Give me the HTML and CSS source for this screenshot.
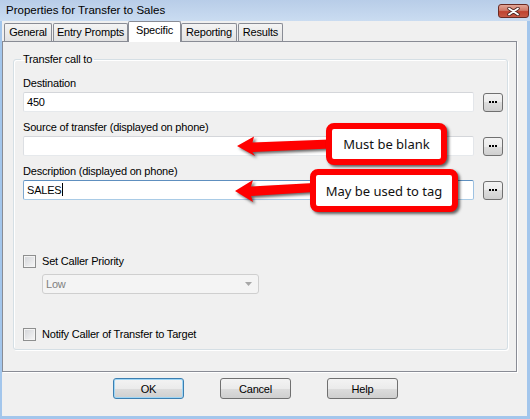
FILE: index.html
```html
<!DOCTYPE html>
<html lang="en">

<head>
    <meta charset="UTF-8">
    <meta name="viewport" content="width=device-width, initial-scale=1.0">
    <title>Properties for Transfer to Sales</title>
    <link rel="stylesheet" href="styles.css">
</head>

<body>
    <div class="window">
        <header class="titlebar">
            <span class="title">Properties for Transfer to Sales</span>
            <span class="close">
                <svg width="13" height="9" viewBox="0 0 13 9">
                    <path d="M2 1.5 L11 7.5 M11 1.5 L2 7.5" stroke="#4a2420" stroke-width="3.4" stroke-linecap="round" />
                    <path d="M2 1.5 L11 7.5 M11 1.5 L2 7.5" stroke="#fff" stroke-width="1.8" stroke-linecap="round" />
                </svg>
            </span>
        </header>

        <div class="frame">
            <nav class="tabs">
                <div class="tab tab_general">General</div>
                <div class="tab tab_prompts">Entry Prompts</div>
                <div class="tab tab_specific active">Specific</div>
                <div class="tab tab_reporting">Reporting</div>
                <div class="tab tab_results">Results</div>
            </nav>

            <section class="panel">
                <fieldset class="group">
                    <legend>Transfer call to</legend>

                    <div class="field">
                        <label>Destination</label>
                        <div class="field_row">
                            <div class="input">450</div>
                            <button class="more">
                                <svg width="8" height="2" viewBox="0 0 8 2"><rect x="0" y="0" width="2" height="2" /><rect x="3" y="0" width="2" height="2" /><rect x="6" y="0" width="2" height="2" /></svg>
                            </button>
                        </div>
                    </div>

                    <div class="field">
                        <label>Source of transfer (displayed on phone)</label>
                        <div class="field_row">
                            <div class="input"></div>
                            <button class="more">
                                <svg width="8" height="2" viewBox="0 0 8 2"><rect x="0" y="0" width="2" height="2" /><rect x="3" y="0" width="2" height="2" /><rect x="6" y="0" width="2" height="2" /></svg>
                            </button>
                        </div>
                    </div>

                    <div class="field">
                        <label>Description (displayed on phone)</label>
                        <div class="field_row">
                            <div class="input focus">SALES<span class="caret"></span></div>
                            <button class="more">
                                <svg width="8" height="2" viewBox="0 0 8 2"><rect x="0" y="0" width="2" height="2" /><rect x="3" y="0" width="2" height="2" /><rect x="6" y="0" width="2" height="2" /></svg>
                            </button>
                        </div>
                    </div>

                    <label class="check check_priority"><span class="box"></span>Set Caller Priority</label>
                    <div class="select">
                        <span>Low</span>
                        <svg width="7" height="4" viewBox="0 0 7 4"><path d="M0 0 H7 L3.5 4 Z" fill="#a7a7a7" /></svg>
                    </div>

                    <label class="check check_notify"><span class="box"></span>Notify Caller of Transfer to Target</label>
                </fieldset>
            </section>

            <div class="buttons">
                <button class="btn default">OK</button>
                <button class="btn">Cancel</button>
                <button class="btn">Help</button>
            </div>
        </div>

        <!-- annotations drawn on top of the dialog -->
        <svg class="arrows" width="530" height="419" viewBox="0 0 530 419">
            <path d="M237 146 L254 136.5 L252.5 142.5 L330 139.5 L330 148.5 L252.5 152 L255 156 Z" fill="#f00" />
            <path d="M235 191 L253 180 L251 186.5 L314 183 L314 192 L251 196 L253 202 Z" fill="#f00" />
        </svg>
        <div class="callout callout_blank">Must be blank</div>
        <div class="callout callout_tag">May be used to tag</div>
    </div>
</body>

</html>
```

FILE: styles.css
```css
* {
    margin: 0;
    padding: 0;
    box-sizing: border-box;
}

body {
    font-family: "Liberation Sans", Arial, sans-serif;
    font-size: 11px;
    color: #000;
}

.window {
    position: relative;
    width: 530px;
    height: 419px;
    display: flex;
    flex-direction: column;
    background-color: #f0f0f0;
    overflow: hidden;
    letter-spacing: -0.2px;
}

/* --------------------- Barra de titulo --------------------- */

.titlebar {
    height: 21px;
    flex: none;
    display: flex;
    justify-content: space-between;
    align-items: flex-start;
    padding-left: 6px;
    background: linear-gradient(#b8cde8, #cadcf1);
}

.title {
    font-size: 11.5px;
    line-height: 21px;
    letter-spacing: 0;
}

.close {
    width: 31px;
    height: 14px;
    margin-top: 4px;
    margin-right: 1px;
    display: flex;
    align-items: center;
    justify-content: center;
    border: 1px solid #6b2a22;
    border-radius: 3px;
    background: linear-gradient(#e2a697, #d07a68 45%, #c0432f 55%, #c65a45);
}

/* --------------------- Corpo --------------------- */

.frame {
    flex: 1;
    display: flex;
    flex-direction: column;
    border: solid #a3c6ec;
    border-width: 0 3px 3px 2px;
}

.tabs {
    height: 20px;
    display: flex;
    align-items: flex-end;
    padding-left: 2px;
}

.tab {
    height: 18px;
    line-height: 17px;
    text-align: center;
    margin-right: 1px;
    border: 1px solid #898c95;
    border-bottom: none;
    border-radius: 2px 2px 0 0;
    background: linear-gradient(#f4f4f4, #e2e2e2);
}

.tab_general { width: 48px; }
.tab_prompts { width: 75px; }
.tab_specific { width: 53px; }
.tab_reporting { width: 56px; }
.tab_results { width: 45px; }

.tab.active {
    position: relative;
    z-index: 1;
    height: 21px;
    margin: 0 0 -1px -1px;
    background: #fff;
}

.panel {
    height: 331px;
    margin-right: 10px;
    border: 1px solid #898c95;
    box-shadow: 1px 1px 0 #fff;
}

/* --------------------- Grupo --------------------- */

.group {
    height: 297px;
    margin: 11px 8px 0 10px;
    padding: 11px 4px 0 9px;
    border: 1px solid #d5dfe5;
    border-radius: 3px;
    box-shadow: inset 1px 1px 0 #fff, 1px 1px 0 #fff;
}

.group legend {
    line-height: 13px;
    padding: 0 2px;
    margin-left: -2px;
}

.field {
    margin-bottom: 9px;
}

.field label {
    display: block;
    line-height: 13px;
    margin-bottom: 2px;
}

.field_row {
    display: flex;
    align-items: center;
    gap: 9px;
}

.input {
    width: 451px;
    height: 20px;
    padding-left: 3px;
    line-height: 18px;
    background: #fff;
    border: 1px solid;
    border-color: #d4d6da #e3e6ea #e6e9ec #dcdfe3;
    border-radius: 2px;
}

.input.focus {
    border-color: #5e8fbf #9ec2e2 #a9cbe6 #7ea8d0;
}

.caret {
    display: inline-block;
    width: 1px;
    height: 13px;
    margin-left: 1px;
    vertical-align: -2px;
    background: #000;
}

.more {
    width: 20px;
    height: 19px;
    display: flex;
    align-items: center;
    justify-content: center;
    border: 1px solid #707070;
    border-radius: 3px;
    background: linear-gradient(#f3f3f3, #ebebeb 50%, #dddddd 50%, #cfcfcf);
}

.check {
    display: flex;
    align-items: center;
    gap: 6px;
    line-height: 13px;
}

.check_priority {
    margin-top: 55px;
}

.check_notify {
    margin-top: 34px;
}

.box {
    width: 13px;
    height: 13px;
    border: 1px solid #8e8f8f;
    background: linear-gradient(135deg, #d2d4d8, #f7f7f7);
    box-shadow: inset 0 0 0 1px #f4f4f4;
}

.select {
    width: 217px;
    height: 20px;
    margin: 6px 0 0 19px;
    padding: 0 6px 0 3px;
    display: flex;
    justify-content: space-between;
    align-items: center;
    color: #808080;
    background: #f4f4f4;
    border: 1px solid #cfcfcf;
    border-radius: 3px;
}

/* --------------------- Botoes --------------------- */

.buttons {
    display: flex;
    gap: 36px;
    margin-top: 6px;
    padding-left: 111px;
}

.btn {
    width: 71px;
    height: 21px;
    font-family: inherit;
    font-size: 11px;
    letter-spacing: -0.2px;
    color: #000;
    border: 1px solid #707070;
    border-radius: 3px;
    background: linear-gradient(#f3f3f3, #ebebeb 50%, #dddddd 50%, #cfcfcf);
}

.btn.default {
    border-color: #3c7fb1;
    box-shadow: inset 0 0 0 1px #9fd6f5;
}

/* --------------------- Anotacoes --------------------- */

.arrows {
    position: absolute;
    left: 0;
    top: 0;
    pointer-events: none;
    filter: drop-shadow(2px 2px 1.5px rgba(0, 0, 0, 0.6));
}

.callout {
    position: absolute;
    display: flex;
    align-items: center;
    justify-content: center;
    font-family: "Noto Sans", sans-serif;
    font-size: 13px;
    letter-spacing: 0;
    color: #111;
    background: #fff;
    border: 6px solid #f00;
    border-radius: 8px;
    box-shadow: 2px 2px 3px rgba(0, 0, 0, 0.6);
}

.callout_blank {
    left: 326px;
    top: 123px;
    width: 121px;
    height: 42px;
}

.callout_tag {
    left: 310px;
    top: 169px;
    width: 148px;
    height: 43px;
}
```
